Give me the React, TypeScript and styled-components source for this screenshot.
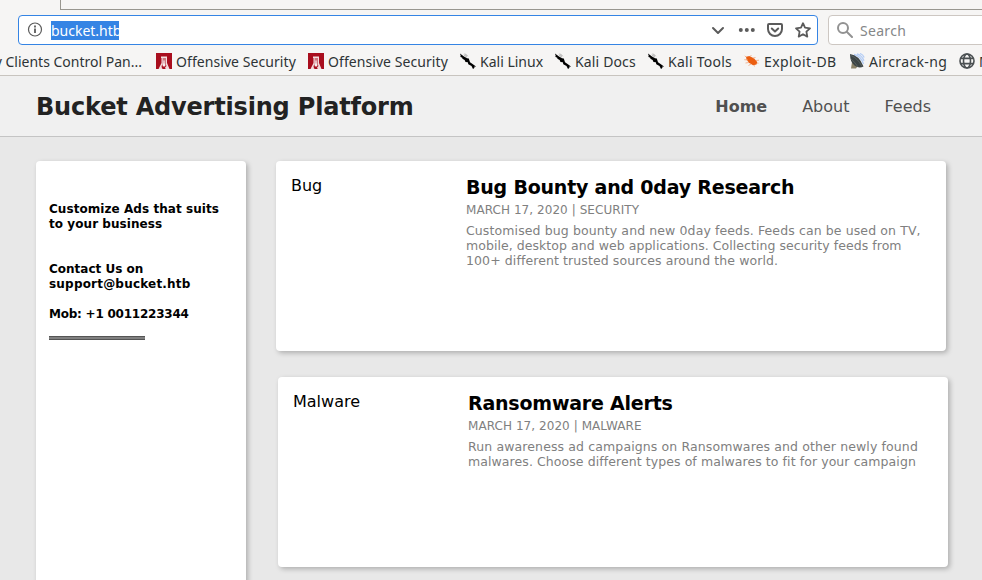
import React from "react";
import styled, { createGlobalStyle } from "styled-components";

const GlobalStyle = createGlobalStyle`
  * { box-sizing: border-box; }
  body { margin: 0; overflow: hidden; background: #e8e8e8; }
`;

const Window = styled.div`
  width: 982px;
  height: 580px;
  overflow: hidden;
  display: flex;
  flex-direction: column;
  font-family: "DejaVu Sans", sans-serif;
`;

const Chrome = styled.div`
  flex: none;
  height: 76px;
  background: #f6f5f4;
  border-bottom: 1px solid #c8c4bf;
  font-family: "Noto Sans", sans-serif;
  font-size: 14px;
  color: #2e3436;
  white-space: nowrap;
`;

const TabStrip = styled.div`
  height: 10px;
  margin-left: 60px;
  border-left: 1px solid #98968f;
  border-bottom: 1px solid #98968f;
`;

const NavBar = styled.div`
  display: flex;
  gap: 10px;
  padding: 5px 0 0 18px;
`;

const AddressBar = styled.div`
  flex: none;
  width: 800px;
  height: 30px;
  display: flex;
  align-items: center;
  padding: 0 6px 0 8px;
  border: 1px solid #3584e4;
  border-radius: 4px;
  background: #fff;
`;

const SelectedUrl = styled.span`
  height: 19px;
  width: 68px;
  line-height: 19px;
  margin: 0 auto 0 8px;
  background: #3584e4;
  color: #fff;
  letter-spacing: -0.02px;
`;

const AddressActions = styled.div`
  display: flex;
  align-items: center;
  gap: 12px;
`;

const SearchBar = styled.div`
  flex: none;
  width: 190px;
  height: 30px;
  display: flex;
  align-items: center;
  gap: 7px;
  padding-left: 8px;
  border: 1px solid #cdc7c2;
  border-radius: 4px;
  background: #fff;
  color: #858788;
  letter-spacing: 0.3px;
`;

const Bookmarks = styled.div`
  display: flex;
  height: 30px;
  padding-top: 2px;
  align-items: center;
`;

const Clipped = styled.div`
  flex: none;
  width: 156px;
  display: flex;
  justify-content: flex-end;
  padding-right: 14px;
`;

const Bookmark = styled.div<{ $width: number; $spacing: number }>`
  flex: none;
  width: ${(p) => p.$width}px;
  display: flex;
  align-items: center;
  gap: 4px;
  letter-spacing: ${(p) => p.$spacing}px;
  svg { flex: none; }
`;

const SiteHeader = styled.header`
  flex: none;
  height: 61px;
  display: flex;
  align-items: center;
  justify-content: space-between;
  padding: 0 51px 0 36px;
  background: #f0f0f0;
  border-bottom: 1px solid #c4c4c4;
`;

const SiteTitle = styled.h1`
  margin: 2px 0 0;
  font-size: 24px;
  line-height: 28px;
  letter-spacing: -0.19px;
  color: #222;
`;

const SiteNav = styled.nav`
  display: flex;
  gap: 35px;
`;

const NavLink = styled.a<{ $active?: boolean }>`
  font-size: 16px;
  line-height: 19px;
  font-weight: ${(p) => (p.$active ? 700 : 400)};
  color: #505050;
`;

const Main = styled.main`
  flex: 1;
  min-height: 0;
  display: flex;
  align-items: flex-start;
  gap: 30px;
  padding: 24px 0 0 36px;
  background: #e8e8e8;
`;

const Panel = styled.section`
  background: #fff;
  border-radius: 4px;
  box-shadow: 2px 2px 5px rgba(0, 0, 0, 0.25);
`;

const Sidebar = styled(Panel)`
  flex: none;
  width: 210px;
  height: 460px;
  padding: 41px 13px 0;
  font-size: 12px;
  line-height: 15px;
  font-weight: 700;
  color: #000;
`;

const SideText = styled.p<{ $after: number }>`
  margin: 0 0 ${(p) => p.$after}px;
  white-space: nowrap;
`;

const Line = styled.span<{ $spacing: number }>`
  display: block;
  letter-spacing: ${(p) => p.$spacing}px;
`;

const Rule = styled.div`
  width: 96px;
  height: 4px;
  background: #808080;
  border: solid #555;
  border-width: 1px 0;
`;

const Feed = styled.div`
  display: flex;
  flex-direction: column;
  gap: 26px;
`;

const Card = styled(Panel)<{ $indent?: number }>`
  width: 670px;
  height: 190px;
  margin-left: ${(p) => p.$indent ?? 0}px;
  display: grid;
  grid-template-columns: 175px 1fr;
  padding: 15px 0 0 15px;
`;

const Category = styled.div`
  font-size: 16px;
  line-height: 19px;
  color: #000;
`;

const Headline = styled.h3`
  margin: 0;
  font-size: 19px;
  line-height: 23px;
  letter-spacing: -0.21px;
  color: #000;
`;

const Meta = styled.div`
  margin-top: 4px;
  font-size: 12px;
  line-height: 15px;
  letter-spacing: 0.06px;
  color: #808080;
`;

const Body = styled.p`
  margin: 5px 0 0;
  font-size: 12.5px;
  line-height: 15px;
  color: #808080;
  white-space: nowrap;
`;

const InfoIcon = () => (
  <svg width="16" height="16" viewBox="0 0 16 16" fill="none" stroke="#5b5b5b">
    <circle cx="8" cy="7.5" r="6.5" strokeWidth="1.2" />
    <path d="M8 6.500v4.500M8 3.500v2" strokeWidth="1.8" />
  </svg>
);

const ChevronIcon = () => (
  <svg width="16" height="16" viewBox="0 0 16 16" fill="none" stroke="#5b5b5b" strokeWidth="2" strokeLinecap="round" strokeLinejoin="round">
    <path d="M3 6l5 5 5-5" />
  </svg>
);

const DotsIcon = () => (
  <svg width="17" height="16" viewBox="0 0 17 16" fill="#5b5b5b">
    <circle cx="2.8" cy="8" r="2" />
    <circle cx="8.8" cy="8" r="2" />
    <circle cx="14.800" cy="8" r="2" />
  </svg>
);

const PocketIcon = () => (
  <svg width="16" height="16" viewBox="0 0 16 16" fill="none" stroke="#5b5b5b" strokeWidth="2" strokeLinecap="round" strokeLinejoin="round">
    <path d="M2 2h12a1 1 0 0 1 1 1v4a7 7 0 0 1-14 0V3a1 1 0 0 1 1-1z" />
    <path d="M4.8 6.500L8 9.500l3.2-3" />
  </svg>
);

const StarIcon = () => (
  <svg width="16" height="16" viewBox="0 0 16 16" fill="none" stroke="#5b5b5b" strokeWidth="1.8" strokeLinejoin="round">
    <path d="M8 1.2l2 4.500 5 .6-3.600 3.300.9 5L8 12.200l-4.300 2.400.9-5L1 6.300l5-.6z" />
  </svg>
);

const SearchIcon = () => (
  <svg width="16" height="16" viewBox="0 0 16 16" fill="none" stroke="#929292" strokeWidth="2" strokeLinecap="round">
    <circle cx="6" cy="6" r="5" />
    <path d="M10 10l5 5" />
  </svg>
);

const OffsecIcon = () => (
  <svg width="16" height="16" viewBox="0 0 16 16">
    <path fill="#a90e1e" d="M0 0h16v16H0z" />
    <path fill="#f3dede" d="M5 3.500h6V10l2.500 6H9.800L8 13.500 6.200 16H2.500L5.500 10V5H5z" />
    <path fill="#a90e1e" d="M6.800 5h.7v5L6.500 12 7 14h2l.5-2-1-2V5h1v6l1 2-2.500 2.500h-2L5.500 13l1.300-2z" />
    <path fill="#fff" d="M7.500 7.500h1V13h-1z" />
    <path fill="#a90e1e" d="M6.300 13.500h3.400L8 16z" />
  </svg>
);

const KaliIcon = () => (
  <svg width="16" height="16" viewBox="0 0 16 16">
    <path d="M0 .5L4 3.500l3 1.800 1.800.2L10 9.200l2.200 1.600L16 13.500l-1 .3-.8-.2.3 1.200L13 16l-1.500-3-3.200-1.700L7.800 9.300 5.500 9l-.9-2-2.200-1.200-.1-1L0 3.700l.8-.4z" />
    <path d="M5 .6l2.600 2.600M3.800 1.600l3 2.400" stroke="#666" strokeWidth=".6" />
  </svg>
);

const ExploitIcon = () => (
  <svg width="16" height="16" viewBox="0 0 16 16">
    <path fill="#ec5e10" d="M2 3.800l3.500-.8 4.700 2.500 3 3.500-.7 2.500-3.500.8L5 9.800 2.500 6.600z" />
    <path d="M2 4L.8 2.800M4 7L.3 6.700M5 9.500l-3.500.5M7 11l-2.500 1.500M10 12l.5 1.500M6 3.500L7.500 2M9 5l2.500-.5M12 7.500l3-.3M13 10l1.500.2" stroke="#f3a478" strokeWidth=".8" />
  </svg>
);

const AircrackIcon = () => (
  <svg width="16" height="16" viewBox="0 0 16 16">
    <path d="M5 1.500Q12 3 14.500 11M8 .8q5 1.500 7 7M11 .5q3 1 4.200 4" fill="none" stroke="#b4cdf5" strokeWidth="1.300" />
    <path fill="#8a8268" d="M3 9l-1 6.500h5l2-3z" />
    <path fill="#3d4545" d="M1 1q9 1 13.500 12.500Q10 16 5.500 12.500T1 1z" />
    <path d="M2 2.500q7 3 11 11M2 6q4 3 7 8" stroke="#667170" strokeWidth=".6" fill="none" />
  </svg>
);

const GlobeIcon = () => (
  <svg width="16" height="16" viewBox="0 0 16 16" fill="none" stroke="#4b5052" strokeWidth="1.600">
    <circle cx="8" cy="8" r="7" />
    <ellipse cx="8" cy="8" rx="3.500" ry="7" />
    <path d="M1.800 5.400h12.400M1.800 10.600h12.400" />
  </svg>
);

const bookmarks = [
  { label: "Offensive Security", icon: <OffsecIcon />, width: 152, spacing: 0.07 },
  { label: "Offensive Security", icon: <OffsecIcon />, width: 152, spacing: 0.07 },
  { label: "Kali Linux", icon: <KaliIcon />, width: 95, spacing: 0 },
  { label: "Kali Docs", icon: <KaliIcon />, width: 93, spacing: 0.15 },
  { label: "Kali Tools", icon: <KaliIcon />, width: 96, spacing: 0.25 },
  { label: "Exploit-DB", icon: <ExploitIcon />, width: 105, spacing: 0.42 },
  { label: "Aircrack-ng", icon: <AircrackIcon />, width: 110, spacing: 0.38 },
  { label: "M", icon: <GlobeIcon />, width: 60, spacing: 0 },
];

export default function App() {
  return (
    <Window>
      <GlobalStyle />
      <Chrome>
        <TabStrip />
        <NavBar>
          <AddressBar>
            <InfoIcon />
            <SelectedUrl>bucket.htb</SelectedUrl>
            <AddressActions>
              <ChevronIcon />
              <DotsIcon />
              <PocketIcon />
              <StarIcon />
            </AddressActions>
          </AddressBar>
          <SearchBar>
            <SearchIcon />
            Search
          </SearchBar>
        </NavBar>
        <Bookmarks>
          <Clipped>y Clients Control Pan...</Clipped>
          {bookmarks.map((b, i) => (
            <Bookmark key={i} $width={b.width} $spacing={b.spacing}>
              {b.icon}
              <span>{b.label}</span>
            </Bookmark>
          ))}
        </Bookmarks>
      </Chrome>
      <SiteHeader>
        <SiteTitle>Bucket Advertising Platform</SiteTitle>
        <SiteNav>
          <NavLink $active>Home</NavLink>
          <NavLink>About</NavLink>
          <NavLink>Feeds</NavLink>
        </SiteNav>
      </SiteHeader>
      <Main>
        <Sidebar>
          <SideText $after={30}>
            <Line $spacing={0.06}>Customize Ads that suits</Line>
            <Line $spacing={0.06}>to your business</Line>
          </SideText>
          <SideText $after={15}>
            <Line $spacing={0}>Contact Us on</Line>
            <Line $spacing={0.2}>support@bucket.htb</Line>
          </SideText>
          <SideText $after={14}>
            <Line $spacing={-0.23}>Mob: +1 0011223344</Line>
          </SideText>
          <Rule />
        </Sidebar>
        <Feed>
          <Card>
            <Category>Bug</Category>
            <div>
              <Headline>Bug Bounty and 0day Research</Headline>
              <Meta>MARCH 17, 2020 | SECURITY</Meta>
              <Body>
                <Line $spacing={0.11}>Customised bug bounty and new 0day feeds. Feeds can be used on TV,</Line>
                <Line $spacing={0.05}>mobile, desktop and web applications. Collecting security feeds from</Line>
                <Line $spacing={0.1}>100+ different trusted sources around the world.</Line>
              </Body>
            </div>
          </Card>
          <Card $indent={2}>
            <Category>Malware</Category>
            <div>
              <Headline>Ransomware Alerts</Headline>
              <Meta>MARCH 17, 2020 | MALWARE</Meta>
              <Body>
                <Line $spacing={0.12}>Run awareness ad campaigns on Ransomwares and other newly found</Line>
                <Line $spacing={0.08}>malwares. Choose different types of malwares to fit for your campaign</Line>
              </Body>
            </div>
          </Card>
        </Feed>
      </Main>
    </Window>
  );
}
